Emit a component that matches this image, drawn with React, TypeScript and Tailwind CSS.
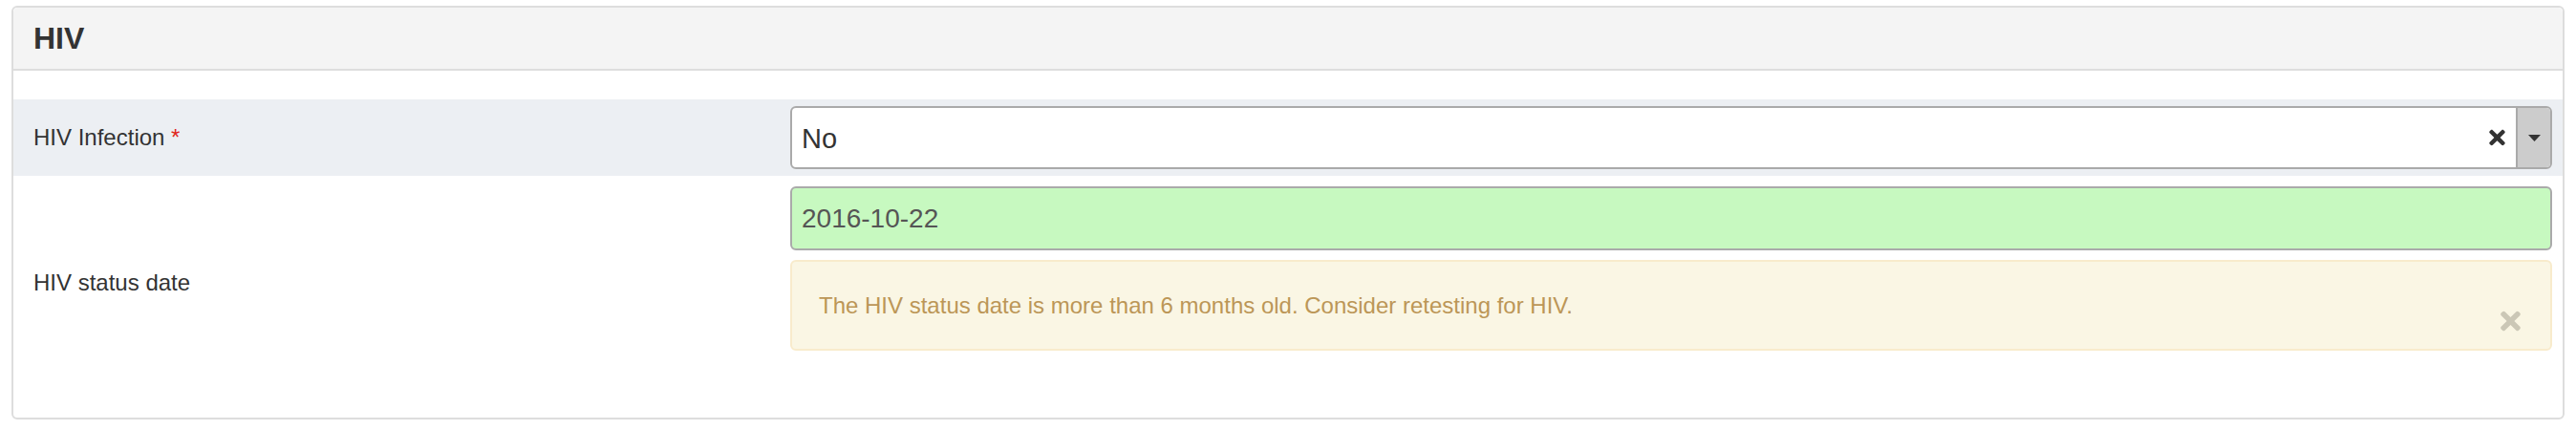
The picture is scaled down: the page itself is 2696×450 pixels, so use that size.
import { FC } from "react"
import { FaTimes } from "react-icons/fa"

const font = { fontFamily: '"Liberation Sans", Arial, sans-serif' }

const App: FC = () => {
  return (
    <div className="min-h-[450px] bg-white px-[12px] pt-[6px] text-[#333]" style={font}>
      <div className="rounded-[6px] border-2 border-[#dddddd] bg-white">
        <div className="flex h-[66px] items-center rounded-t-[5px] border-b-2 border-[#dddddd] bg-[#f4f4f4] pl-[21px]">
          <h3 className="text-[32px] font-bold leading-none text-[#333]">HIV</h3>
        </div>

        <div className="pt-[30px] pb-[29px]">
          {/* HIV Infection */}
          <div className="flex h-[80px] items-center bg-[#eceff3]">
            <label className="w-[813px] shrink-0 pl-[21px] text-[24px]">
              HIV Infection <span className="text-[#e0261c]">*</span>
            </label>
            <div className="flex-1 pr-[11px]">
              <div className="flex h-[66px] overflow-hidden rounded-[6px] border-2 border-[#aaaaaa] bg-white">
                <div className="flex flex-1 items-center pl-[10px] pt-[4px] text-[29px] text-[#333]">No</div>
                <div className="flex w-[38px] items-center justify-start pl-[10px]">
                  <FaTimes className="h-[24px] w-[17px] text-[#333]" />
                </div>
                <div className="flex w-[36px] items-center justify-center border-l-2 border-[#aaaaaa] bg-[#cccccc]">
                  <svg width="13" height="7" viewBox="0 0 13 7">
                    <polygon points="0,0 13,0 6.5,7" fill="#333" />
                  </svg>
                </div>
              </div>
            </div>
          </div>

          {/* HIV status date */}
          <div className="flex items-center">
            <label className="w-[813px] shrink-0 pl-[21px] text-[24px]">HIV status date</label>
            <div className="flex-1 pt-[11px] pb-[41px] pr-[11px]">
              <div className="flex h-[67px] items-center rounded-[6px] border-2 border-[#aaaaaa] bg-[#c7f9c0] pl-[10px] text-[28px] text-[#555]">
                2016-10-22
              </div>
              <div className="relative mt-[10px] flex h-[95px] items-center rounded-[6px] border-2 border-[#f8ebcc] bg-[#faf6e4] pl-[28px] text-[24px] text-[#bc9657]">
                The HIV status date is more than 6 months old. Consider retesting for HIV.
                <FaTimes className="absolute right-[31px] top-[47px] h-[30px] w-[21px] text-[#cbc7b6]" />
              </div>
            </div>
          </div>
        </div>
      </div>
    </div>
  )
}

export default App
